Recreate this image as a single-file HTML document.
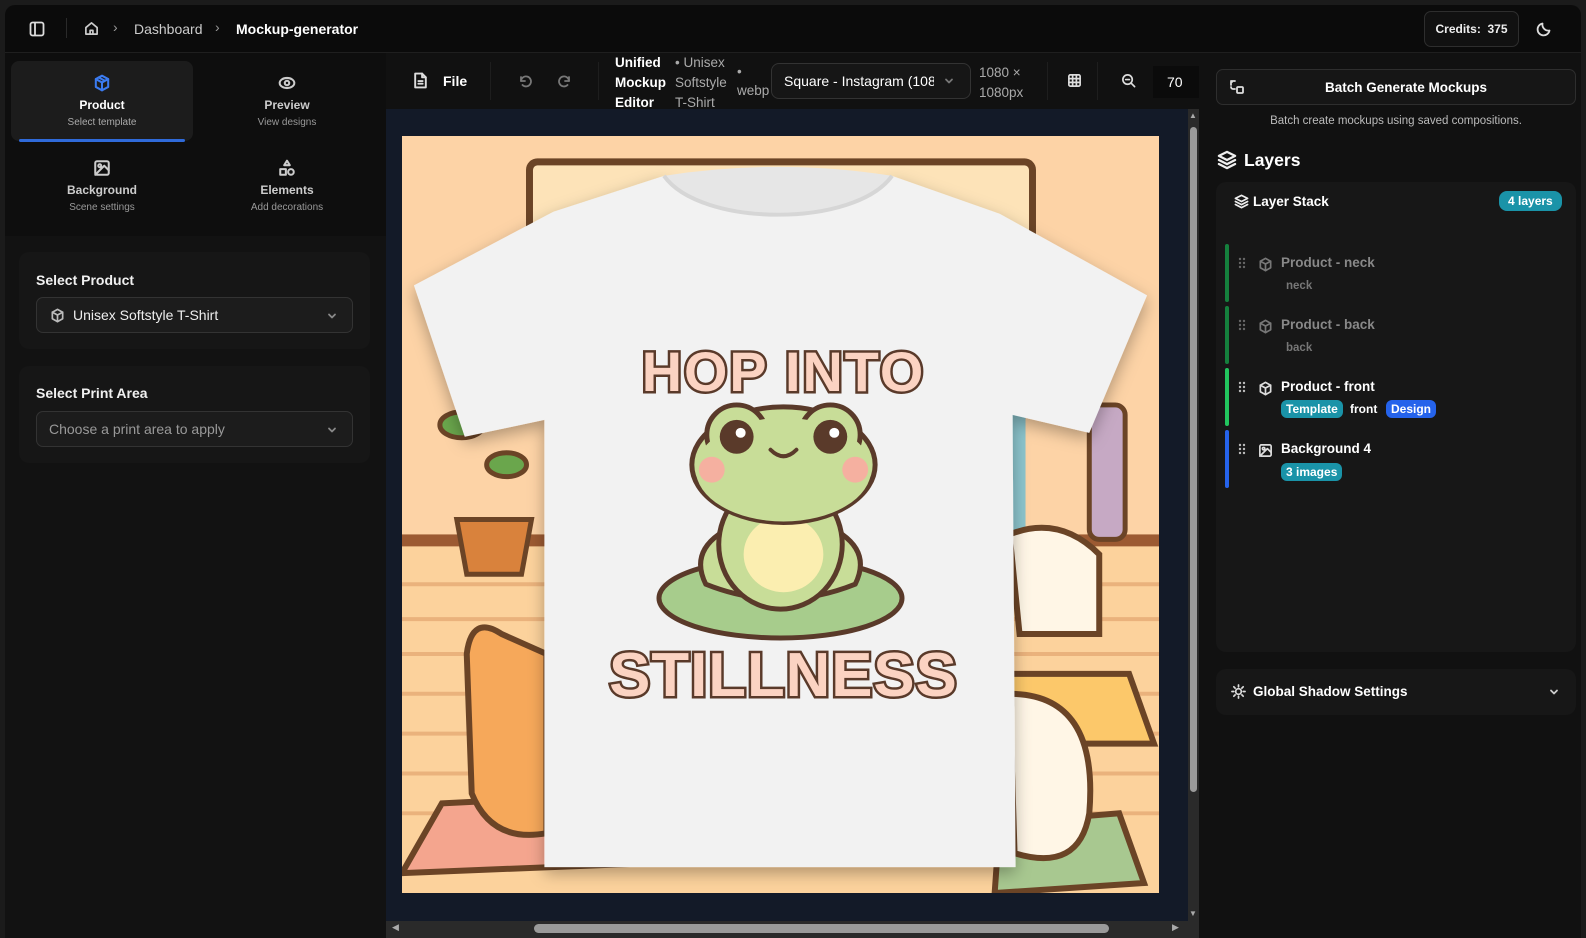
<!DOCTYPE html>
<html><head><meta charset="utf-8">
<style>
*{box-sizing:border-box;margin:0;padding:0}
body{width:1586px;height:938px;background:#1b1b1b;font-family:"Liberation Sans",sans-serif;color:#e8e8e8;position:relative;overflow:hidden}
.a{position:absolute}
.frame{left:5px;top:5px;width:1576px;height:933px;background:#0b0b0b;border-radius:10px;overflow:hidden}
.b{font-weight:bold}
svg{display:block}
.ico{stroke:currentColor;fill:none;stroke-width:1.8;stroke-linecap:round;stroke-linejoin:round}
.card{background:#161616;border-radius:10px}
.sel{background:#1c1c1c;border:1px solid #333;border-radius:7px;height:36px}
.badge{border-radius:6px;font-size:12px;font-weight:bold;color:#fff;padding:2px 5px;display:inline-block}
</style></head><body>
<div class="a frame"></div>
<div class="a" style="left:5px;top:52px;width:1576px;height:1px;background:#1f1f1f"></div>
<svg class="a ico" style="left:29px;top:21px;color:#ddd" width="16" height="16" viewBox="0 0 16 16"><rect x="1.5" y="1.5" width="13" height="13" rx="2"/><line x1="6" y1="2" x2="6" y2="14"/></svg>
<div class="a" style="left:66px;top:18px;width:1px;height:20px;background:#2a2a2a"></div>
<svg class="a ico" style="left:84px;top:21px;color:#ccc" width="15" height="15" viewBox="0 0 16 16"><path d="M2 7L8 2l6 5v7H2z"/><path d="M6.5 14v-4h3v4"/></svg>
<div class="a" style="left:113px;top:19px;font-size:14px;color:#999">›</div>
<div class="a" style="left:134px;top:21px;font-size:14px;color:#ccc">Dashboard</div>
<div class="a" style="left:215px;top:19px;font-size:14px;color:#999">›</div>
<div class="a b" style="left:236px;top:21px;font-size:14px;color:#fff">Mockup-generator</div>
<div class="a" style="left:1424px;top:11px;width:95px;height:36px;border:1px solid #2e2e2e;border-radius:7px;background:#111;font-size:12px;font-weight:bold;line-height:34px;text-align:center;color:#eee">Credits:&nbsp; 375</div>
<svg class="a ico" style="left:1536px;top:21px;color:#ddd" width="16" height="16" viewBox="0 0 16 16"><path d="M13.5 9.5A6 6 0 0 1 6.5 2.5a6 6 0 1 0 7 7z"/></svg>

<div class="a" style="left:5px;top:53px;width:381px;height:885px;background:#121212"></div>
<div class="a" style="left:5px;top:53px;width:381px;height:183px;background:#0e0e0e"></div>
<div class="a" style="left:11px;top:61px;width:182px;height:80px;background:#1c1c1c;border-radius:8px"></div>
<div class="a" style="left:19px;top:139px;width:166px;height:3px;background:#2f6ad9;border-radius:2px"></div>
<svg class="a ico" style="left:93px;top:74px;color:#3b7bf0" width="18" height="18" viewBox="0 0 16 16"><path d="M8 1.5l5.5 3v7L8 14.5l-5.5-3v-7z"/><path d="M2.5 4.5L8 7.5l5.5-3M8 7.5v7M5 3l5.5 3"/></svg>
<div class="a b" style="left:11px;top:98px;width:182px;text-align:center;font-size:12px;color:#fff">Product</div>
<div class="a" style="left:11px;top:117px;width:182px;text-align:center;font-size:10px;color:#aaa">Select template</div>
<svg class="a ico" style="left:278px;top:74px;color:#ccc" width="18" height="18" viewBox="0 0 16 16"><ellipse cx="8" cy="8" rx="6.5" ry="4.5"/><circle cx="8" cy="8" r="2"/></svg>
<div class="a b" style="left:196px;top:98px;width:182px;text-align:center;font-size:12px;color:#ccc">Preview</div>
<div class="a" style="left:196px;top:117px;width:182px;text-align:center;font-size:10px;color:#999">View designs</div>
<svg class="a ico" style="left:93px;top:159px;color:#ccc" width="18" height="18" viewBox="0 0 16 16"><rect x="2" y="2" width="12" height="12" rx="1.5"/><circle cx="6" cy="6" r="1.3"/><path d="M14 10l-4-4-8 8"/></svg>
<div class="a b" style="left:11px;top:183px;width:182px;text-align:center;font-size:12px;color:#ccc">Background</div>
<div class="a" style="left:11px;top:202px;width:182px;text-align:center;font-size:10px;color:#999">Scene settings</div>
<svg class="a ico" style="left:278px;top:159px;color:#ccc" width="18" height="18" viewBox="0 0 16 16"><path d="M8 1.5l2.5 4h-5z"/><rect x="2" y="9" width="5" height="5"/><circle cx="11.5" cy="11.5" r="2.5"/></svg>
<div class="a b" style="left:196px;top:183px;width:182px;text-align:center;font-size:12px;color:#ccc">Elements</div>
<div class="a" style="left:196px;top:202px;width:182px;text-align:center;font-size:10px;color:#999">Add decorations</div>

<div class="a card" style="left:19px;top:252px;width:351px;height:97px"></div>
<div class="a b" style="left:36px;top:272px;font-size:14px;color:#f0f0f0">Select Product</div>
<div class="a sel" style="left:36px;top:297px;width:317px"></div>
<svg class="a ico" style="left:50px;top:308px;color:#bbb" width="15" height="15" viewBox="0 0 16 16"><path d="M8 1.5l5.5 3v7L8 14.5l-5.5-3v-7z"/><path d="M2.5 4.5L8 7.5l5.5-3M8 7.5v7"/></svg>
<div class="a" style="left:73px;top:307px;font-size:14px;color:#eee">Unisex Softstyle T-Shirt</div>
<svg class="a ico" style="left:326px;top:310px;color:#888" width="12" height="12" viewBox="0 0 12 12"><path d="M3 4.5l3 3 3-3"/></svg>
<div class="a card" style="left:19px;top:366px;width:351px;height:97px"></div>
<div class="a b" style="left:36px;top:385px;font-size:14px;color:#f0f0f0">Select Print Area</div>
<div class="a sel" style="left:36px;top:411px;width:317px"></div>
<div class="a" style="left:49px;top:421px;font-size:14px;color:#999">Choose a print area to apply</div>
<svg class="a ico" style="left:326px;top:424px;color:#888" width="12" height="12" viewBox="0 0 12 12"><path d="M3 4.5l3 3 3-3"/></svg>

<div class="a" style="left:386px;top:53px;width:813px;height:56px;background:#111"></div>
<svg class="a ico" style="left:413px;top:72px;color:#ddd" width="15" height="17" viewBox="0 0 14 16"><path d="M2 1.5h6.5L12 5v9.5H2z"/><path d="M8.5 1.5V5H12M5 8.5h4M5 11h4"/></svg>
<div class="a b" style="left:443px;top:73px;font-size:14px;color:#fff">File</div>
<div class="a" style="left:490px;top:62px;width:1px;height:38px;background:#1e1e1e"></div>
<svg class="a ico" style="left:518px;top:74px;color:#777" width="14" height="14" viewBox="0 0 14 14"><path d="M3 3v4h4"/><path d="M3 7a5 5 0 1 1 1.5 4"/></svg>
<svg class="a ico" style="left:558px;top:74px;color:#777" width="14" height="14" viewBox="0 0 14 14"><path d="M11 3v4H7"/><path d="M11 7a5 5 0 1 0-1.5 4"/></svg>
<div class="a" style="left:598px;top:62px;width:1px;height:38px;background:#1e1e1e"></div>
<div class="a b" style="left:615px;top:53px;font-size:13.5px;line-height:20px;color:#fff">Unified<br>Mockup<br>Editor</div>
<div class="a" style="left:675px;top:53px;font-size:13.5px;line-height:20px;color:#aaa">• Unisex<br>Softstyle<br>T-Shirt</div>
<div class="a" style="left:737px;top:64px;font-size:13.5px;color:#aaa">•</div>
<div class="a" style="left:737px;top:83px;font-size:13.5px;color:#aaa">webp</div>
<div class="a" style="left:771px;top:63px;width:200px;height:36px;border:1px solid #333;border-radius:8px;background:#161616"></div>
<div class="a" style="left:784px;top:73px;font-size:14px;color:#fff;width:150px;overflow:hidden;white-space:nowrap">Square - Instagram (108</div>
<svg class="a ico" style="left:943px;top:75px;color:#777" width="12" height="12" viewBox="0 0 12 12"><path d="M3 4.5l3 3 3-3"/></svg>
<div class="a" style="left:979px;top:63px;font-size:13.5px;line-height:20px;color:#aaa">1080 ×<br>1080px</div>
<div class="a" style="left:1047px;top:62px;width:1px;height:38px;background:#1e1e1e"></div>
<svg class="a ico" style="left:1067px;top:73px;color:#ddd" width="15" height="15" viewBox="0 0 16 16"><rect x="2" y="2" width="12" height="12" rx="1.5"/><path d="M6 2v12M10 2v12M2 6h12M2 10h12"/></svg>
<div class="a" style="left:1097px;top:62px;width:1px;height:38px;background:#1e1e1e"></div>
<svg class="a ico" style="left:1121px;top:73px;color:#ddd" width="15" height="15" viewBox="0 0 16 16"><circle cx="7" cy="7" r="5"/><path d="M11 11l3.5 3.5M5 7h4"/></svg>
<div class="a" style="left:1153px;top:66px;width:46px;height:32px;background:#0b0b0b;font-size:14px;line-height:32px;padding-left:14px;color:#fff">70</div>

<div class="a" style="left:386px;top:109px;width:813px;height:829px;background:#131a28"></div>
<div class="a" style="left:1188px;top:109px;width:11px;height:813px;background:#2a2a2a"></div>
<div class="a" style="left:1190px;top:127px;width:7px;height:665px;background:#9a9a9a;border-radius:4px"></div>
<div class="a" style="left:1189px;top:111px;font-size:8px;color:#aaa">▲</div>
<div class="a" style="left:1189px;top:909px;font-size:8px;color:#aaa">▼</div>
<div class="a" style="left:386px;top:921px;width:813px;height:17px;background:#2a2a2a"></div>
<div class="a" style="left:534px;top:924px;width:575px;height:9px;background:#9a9a9a;border-radius:5px"></div>
<div class="a" style="left:392px;top:922px;font-size:9px;color:#aaa">◀</div>
<div class="a" style="left:1172px;top:922px;font-size:9px;color:#aaa">▶</div>

<svg class="a" style="left:402px;top:136px" width="757" height="757" viewBox="0 0 760 760">
<defs><filter id="sh" x="-10%" y="-10%" width="120%" height="120%"><feDropShadow dx="0" dy="6" stdDeviation="8" flood-color="#000" flood-opacity="0.3"/></filter></defs>
<rect width="760" height="760" fill="#fdd3a6"/>
<rect x="0" y="400" width="760" height="360" fill="#fcd29c"/>
<rect x="0" y="400" width="760" height="12" fill="#9c5a32"/>
<g stroke="#eab27c" stroke-width="4"><line x1="0" y1="450" x2="760" y2="450"/><line x1="0" y1="485" x2="760" y2="485"/><line x1="0" y1="520" x2="760" y2="520"/><line x1="0" y1="560" x2="760" y2="560"/><line x1="0" y1="600" x2="760" y2="600"/><line x1="0" y1="640" x2="760" y2="640"/><line x1="0" y1="680" x2="760" y2="680"/></g>
<rect x="128" y="26" width="505" height="110" rx="8" fill="#fde3b8" stroke="#6b4426" stroke-width="7"/>
<rect x="536" y="268" width="45" height="140" fill="#e88f7c"/><rect x="581" y="268" width="45" height="140" fill="#8cc4cc"/><rect x="690" y="270" width="36" height="135" rx="10" fill="#c6a9c4" stroke="#6b4426" stroke-width="5"/>
<path d="M55 385h75l-10 55h-55z" fill="#d9823c" stroke="#6b4426" stroke-width="5"/>
<ellipse cx="60" cy="290" rx="22" ry="13" fill="#6aa64c" stroke="#6b4426" stroke-width="5"/>
<ellipse cx="105" cy="330" rx="20" ry="12" fill="#6aa64c" stroke="#6b4426" stroke-width="5"/>
<path d="M40 670l200-10 10 70-250 10z" fill="#f4a58e" stroke="#6b4426" stroke-width="6"/>
<path d="M65 520 Q70 480 100 500 L145 520 L145 700 Q90 710 70 660z" fill="#f6a85a" stroke="#6b4426" stroke-width="6"/>
<path d="M570 540l160 0 25 70-190 0z" fill="#fcc86a" stroke="#6b4426" stroke-width="6"/>
<path d="M610 400 Q660 380 700 420 L700 500 L620 500z" fill="#fff6e6" stroke="#6b4426" stroke-width="6"/>
<path d="M600 690l120-10 25 70-150 10z" fill="#a8c890" stroke="#6b4426" stroke-width="6"/>
<path d="M610 560 Q700 560 690 680 Q680 740 615 720z" fill="#fff6e6" stroke="#6b4426" stroke-width="6"/>
<path d="M263 40 C300 92 455 92 492 40 L600 78 L748 160 L690 298 L613 280 L616 734 L143 734 L143 285 L63 302 L12 150 L152 76 Z" fill="#f2f2f2" filter="url(#sh)"/>
<path d="M263 40 Q378 22 492 40 C455 92 300 92 263 40Z" fill="#e6e6e6"/>
<path d="M263 40 C300 92 455 92 492 40" fill="none" stroke="#d6d6d6" stroke-width="4"/>
<g stroke="#5a3a2a" stroke-width="5" stroke-linejoin="round">
<ellipse cx="380" cy="464" rx="122" ry="40" fill="#a7cc8c"/>
<path d="M318 400 Q290 420 305 450 Q380 480 455 450 Q470 420 442 400Z" fill="#c8dd98"/>
<ellipse cx="380" cy="410" rx="62" ry="65" fill="#c8dd98"/>
<ellipse cx="383" cy="420" rx="40" ry="38" fill="#fbeeb0" stroke="none"/>
<ellipse cx="383" cy="330" rx="92" ry="58" fill="#c8dd98"/>
<circle cx="336" cy="300" r="30" fill="#c8dd98"/><circle cx="430" cy="300" r="30" fill="#c8dd98"/>
<ellipse cx="383" cy="335" rx="88" ry="52" fill="#c8dd98" stroke="none"/>
</g>
<circle cx="336" cy="302" r="17" fill="#5a3a2a"/><circle cx="430" cy="302" r="17" fill="#5a3a2a"/>
<circle cx="340" cy="298" r="5" fill="#fff"/><circle cx="434" cy="298" r="5" fill="#fff"/>
<circle cx="311" cy="335" r="13" fill="#f5b0a0"/><circle cx="455" cy="335" r="13" fill="#f5b0a0"/>
<path d="M370 315 Q383 328 396 315" fill="none" stroke="#5a3a2a" stroke-width="4" stroke-linecap="round"/>
<g font-family="Liberation Sans,sans-serif" font-weight="bold" text-anchor="middle" fill="#fbd3c2" stroke="#5a3a2a" stroke-width="5" paint-order="stroke">
<text x="383" y="256" font-size="56" letter-spacing="2">HOP INTO</text>
<text x="383" y="562" font-size="62" letter-spacing="1">STILLNESS</text>
</g>
</svg>

<div class="a" style="left:1199px;top:53px;width:382px;height:885px;background:#111"></div>
<div class="a" style="left:1216px;top:69px;width:360px;height:36px;border:1px solid #2e2e2e;border-radius:7px;background:#161616"></div>
<svg class="a ico" style="left:1229px;top:79px;color:#ddd" width="16" height="16" viewBox="0 0 16 16"><rect x="8" y="8" width="6" height="6" rx="1"/><path d="M2 6V3a1 1 0 0 1 1-1h3M2 2l1 1M6 10H4a2 2 0 0 1-2-2"/></svg>
<div class="a b" style="left:1216px;top:80px;width:380px;text-align:center;font-size:13.5px;color:#fff">Batch Generate Mockups</div>
<div class="a" style="left:1216px;top:115px;width:360px;text-align:center;font-size:11.5px;color:#bbb">Batch create mockups using saved compositions.</div>
<svg class="a ico" style="left:1217px;top:150px;color:#eee" width="20" height="20" viewBox="0 0 16 16"><path d="M8 1.5l6.5 3.2L8 8 1.5 4.7z"/><path d="M1.5 8L8 11.3 14.5 8M1.5 11.2L8 14.5l6.5-3.3"/></svg>
<div class="a b" style="left:1244px;top:150px;font-size:17.5px;color:#fff">Layers</div>
<div class="a card" style="left:1216px;top:182px;width:360px;height:470px;background:#171717"></div>
<svg class="a ico" style="left:1234px;top:194px;color:#eee" width="15" height="15" viewBox="0 0 16 16"><path d="M8 1.5l6.5 3.2L8 8 1.5 4.7z"/><path d="M1.5 8L8 11.3 14.5 8M1.5 11.2L8 14.5l6.5-3.3"/></svg>
<div class="a b" style="left:1253px;top:194px;font-size:13.5px;color:#fff">Layer Stack</div>
<div class="a badge" style="left:1499px;top:191px;background:#1a93a8;font-size:12px;padding:3px 9px;border-radius:8px">4 layers</div>

<div class="a" style="left:1225px;top:244px;width:4px;height:58px;background:#15803d;border-radius:2px"></div>
<div class="a" style="left:1225px;top:306px;width:4px;height:58px;background:#15803d;border-radius:2px"></div>
<div class="a" style="left:1225px;top:368px;width:4px;height:58px;background:#22c55e;border-radius:2px"></div>
<div class="a" style="left:1225px;top:430px;width:4px;height:58px;background:#2563eb;border-radius:2px"></div>

<svg class="a ico" style="left:1258px;top:257px;color:#777" width="15" height="15" viewBox="0 0 16 16"><path d="M8 1.5l5.5 3v7L8 14.5l-5.5-3v-7z"/><path d="M2.5 4.5L8 7.5l5.5-3M8 7.5v7"/></svg>
<div class="a b" style="left:1281px;top:255px;font-size:13.5px;color:#888">Product - neck</div>
<div class="a b" style="left:1286px;top:280px;font-size:11.5px;color:#777">neck</div>

<svg class="a ico" style="left:1258px;top:319px;color:#777" width="15" height="15" viewBox="0 0 16 16"><path d="M8 1.5l5.5 3v7L8 14.5l-5.5-3v-7z"/><path d="M2.5 4.5L8 7.5l5.5-3M8 7.5v7"/></svg>
<div class="a b" style="left:1281px;top:317px;font-size:13.5px;color:#888">Product - back</div>
<div class="a b" style="left:1286px;top:342px;font-size:11.5px;color:#777">back</div>

<svg class="a ico" style="left:1258px;top:381px;color:#ddd" width="15" height="15" viewBox="0 0 16 16"><path d="M8 1.5l5.5 3v7L8 14.5l-5.5-3v-7z"/><path d="M2.5 4.5L8 7.5l5.5-3M8 7.5v7"/></svg>
<div class="a b" style="left:1281px;top:379px;font-size:13.5px;color:#fff">Product - front</div>
<div class="a badge" style="left:1281px;top:400px;background:#1a93a8">Template</div>
<div class="a b" style="left:1350px;top:402px;font-size:12px;color:#fff">front</div>
<div class="a badge" style="left:1386px;top:400px;background:#2563eb">Design</div>

<svg class="a ico" style="left:1258px;top:443px;color:#ddd" width="15" height="15" viewBox="0 0 16 16"><rect x="2" y="2" width="12" height="12" rx="1.5"/><circle cx="6" cy="6" r="1.3"/><path d="M14 10l-4-4-8 8"/></svg>
<div class="a b" style="left:1281px;top:441px;font-size:13.5px;color:#fff">Background 4</div>
<div class="a badge" style="left:1281px;top:463px;background:#1a93a8">3 images</div>

<svg class="a" style="left:1238px;top:257px" width="8" height="220" viewBox="0 0 8 220" fill="#666">
<g><circle cx="2" cy="2" r="1.2"/><circle cx="6" cy="2" r="1.2"/><circle cx="2" cy="6" r="1.2"/><circle cx="6" cy="6" r="1.2"/><circle cx="2" cy="10" r="1.2"/><circle cx="6" cy="10" r="1.2"/></g>
<g transform="translate(0,62)"><circle cx="2" cy="2" r="1.2"/><circle cx="6" cy="2" r="1.2"/><circle cx="2" cy="6" r="1.2"/><circle cx="6" cy="6" r="1.2"/><circle cx="2" cy="10" r="1.2"/><circle cx="6" cy="10" r="1.2"/></g>
<g transform="translate(0,124)" fill="#bbb"><circle cx="2" cy="2" r="1.2"/><circle cx="6" cy="2" r="1.2"/><circle cx="2" cy="6" r="1.2"/><circle cx="6" cy="6" r="1.2"/><circle cx="2" cy="10" r="1.2"/><circle cx="6" cy="10" r="1.2"/></g>
<g transform="translate(0,186)" fill="#bbb"><circle cx="2" cy="2" r="1.2"/><circle cx="6" cy="2" r="1.2"/><circle cx="2" cy="6" r="1.2"/><circle cx="6" cy="6" r="1.2"/><circle cx="2" cy="10" r="1.2"/><circle cx="6" cy="10" r="1.2"/></g>
</svg>

<div class="a card" style="left:1216px;top:669px;width:360px;height:46px;background:#171717"></div>
<svg class="a ico" style="left:1231px;top:684px;color:#ddd" width="15" height="15" viewBox="0 0 16 16"><circle cx="8" cy="8" r="3"/><path d="M8 1v2M8 13v2M1 8h2M13 8h2M3 3l1.4 1.4M11.6 11.6L13 13M3 13l1.4-1.4M11.6 4.4L13 3"/></svg>
<div class="a b" style="left:1253px;top:684px;font-size:13.5px;color:#fff">Global Shadow Settings</div>
<svg class="a ico" style="left:1548px;top:686px;color:#ccc" width="12" height="12" viewBox="0 0 12 12"><path d="M3 4.5l3 3 3-3"/></svg>
</body></html>
